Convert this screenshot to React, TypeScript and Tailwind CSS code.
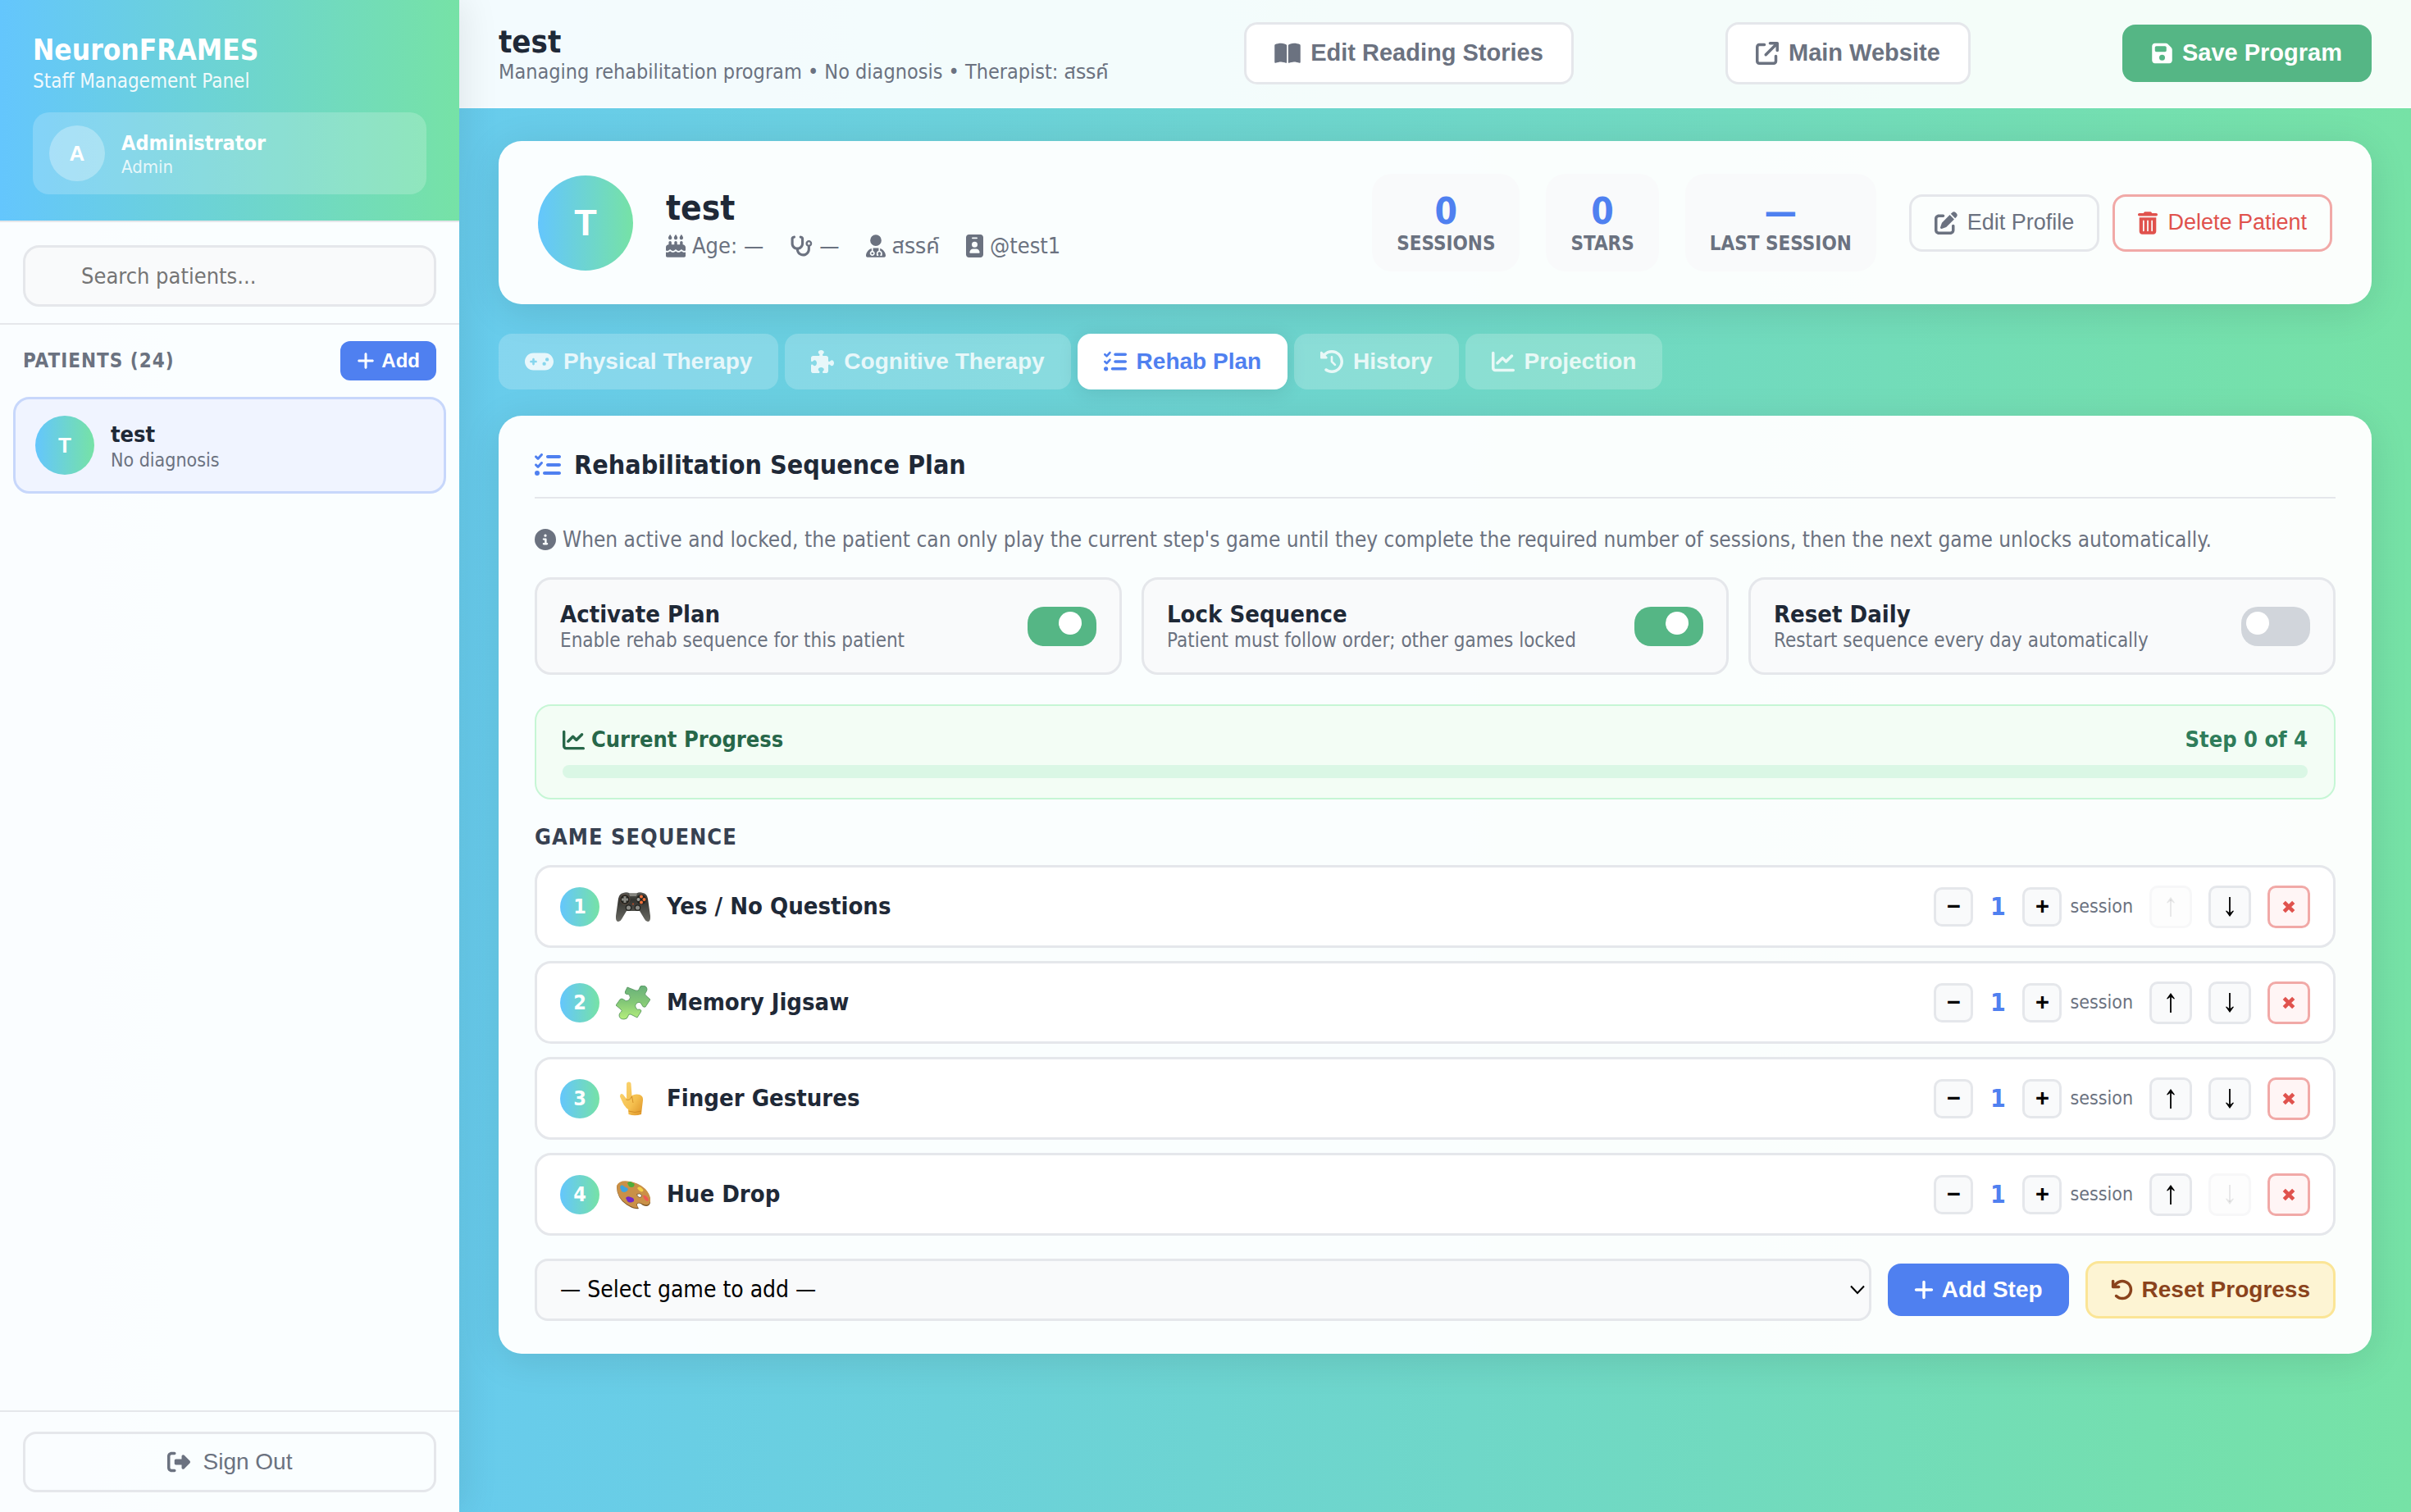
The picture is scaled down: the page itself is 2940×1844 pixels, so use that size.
import { useState } from 'react';
import type { ReactNode } from 'react';
import clsx from 'clsx';
import {
  FaArrowRotateLeft,
  FaArrowUpRightFromSquare,
  FaBookOpen,
  FaCakeCandles,
  FaChartLine,
  FaCircleInfo,
  FaClockRotateLeft,
  FaFloppyDisk,
  FaGamepad,
  FaIdBadge,
  FaListCheck,
  FaPenToSquare,
  FaPlus,
  FaPuzzlePiece,
  FaRightFromBracket,
  FaStethoscope,
  FaTrashCan,
  FaUserDoctor,
} from 'react-icons/fa6';

const GRADIENT = 'bg-[linear-gradient(90deg,#64c6fd,#76e2a6)]';
const BUTTON_FONT = "font-['Liberation_Sans',Arial,sans-serif]";

interface AvatarProps {
  letter: string;
  className: string;
}

function Avatar({ letter, className }: AvatarProps) {
  return (
    <div
      className={clsx(
        'rounded-full flex items-center justify-center shrink-0 text-white font-bold',
        className,
      )}
    >
      {letter}
    </div>
  );
}

/* Game pictures */

function ControllerPicture() {
  return (
    <svg viewBox="0 0 42 42" className="w-[42px] h-[42px]" aria-hidden="true">
      <defs>
        <linearGradient id="pad" x1="0" y1="0" x2="0" y2="1">
          <stop offset="0" stopColor="#5a5a56" />
          <stop offset="0.25" stopColor="#33332f" />
          <stop offset="1" stopColor="#6a6a64" />
        </linearGradient>
      </defs>
      <path
        d="M9 4 Q13 2.5 17 4.5 H25 Q29 2.5 33 4 Q38 5 39 11 L42 32 Q42.5 39 39 39 Q36.5 39 35 36 L29 26 H13 L7 36 Q5.5 39 3 39 Q-0.5 39 0 32 L3 11 Q4 5 9 4Z"
        fill="url(#pad)"
      />
      <path d="M16 4.5 H26 L25 8 H17Z" fill="#85857f" />
      <circle cx="11" cy="12" r="6" fill="#23231f" stroke="#6d5446" strokeWidth="0.7" />
      <path d="M9.5 8 H12.5 V10.5 H15 V13.5 H12.5 V16 H9.5 V13.5 H7 V10.5 H9.5Z" fill="#8a8a84" />
      <circle cx="31" cy="12" r="6" fill="#23231f" />
      <circle cx="31" cy="8.5" r="2" fill="#f0713a" />
      <circle cx="27.5" cy="12" r="2" fill="#a3a39d" />
      <circle cx="34.5" cy="12" r="2" fill="#f0713a" />
      <circle cx="31" cy="15.5" r="2" fill="#f0713a" />
      <circle cx="15.5" cy="22" r="3.8" fill="#20201d" />
      <circle cx="15.5" cy="22" r="2.6" fill="#8b8b86" />
      <circle cx="26.5" cy="22" r="3.8" fill="#20201d" />
      <circle cx="26.5" cy="22" r="2.6" fill="#8b8b86" />
      <circle cx="21" cy="17.5" r="1" fill="#c9502a" />
    </svg>
  );
}

function JigsawPicture() {
  return (
    <svg viewBox="0 0 42 42" className="w-[42px] h-[42px]" aria-hidden="true">
      <defs>
        <linearGradient id="jig" x1="0" y1="0" x2="0" y2="1">
          <stop offset="0" stopColor="#68b07a" />
          <stop offset="0.5" stopColor="#84c877" />
          <stop offset="1" stopColor="#b4ee7c" />
        </linearGradient>
      </defs>
      <path
        d="M14 2 L24 6 Q28 7 28.5 4 Q29 0 33 0 Q38 0.5 38 5 Q37.5 7 36 9 Q35 11 37 12.5 L42 17 L36 26 Q33 27 32 24 Q30 19 26 21 Q22 24 25 28 Q26 30 29 29 Q32 30 30.5 32 L26 39 L18 35 Q15 34.5 15 37 Q14 41 10 41 Q4 41 4 36 Q4 33.5 6.5 32 Q8 30.5 6 29 L0 24 L5 17 Q7 15 9.5 17 Q12 20 15.5 18 Q19 15 16.5 11.5 Q15 10 13 10.5 Q10.5 10 11.5 7Z"
        fill="url(#jig)"
        stroke="#4f8f58"
        strokeWidth="0.8"
        strokeLinejoin="round"
      />
    </svg>
  );
}

function FingerPicture() {
  return (
    <svg viewBox="0 0 42 42" className="w-[42px] h-[42px]" aria-hidden="true">
      <defs>
        <linearGradient id="hand" x1="0" y1="0" x2="1" y2="1">
          <stop offset="0" stopColor="#fbd877" />
          <stop offset="0.6" stopColor="#f5c04f" />
          <stop offset="1" stopColor="#dd9226" />
        </linearGradient>
      </defs>
      <path
        d="M13 3 Q13 0.5 15.8 0.5 Q18.5 0.5 18.5 3 L19.5 17 Q24 14.5 29 16 Q33.5 17.5 33 23 L32 31 L31 40 Q23 42.5 15.5 40 L15 34 Q10 30 8.5 26 L5 18.5 Q5 15 7 15 Q9 15 10.5 18 L13 21Z"
        fill="url(#hand)"
      />
      <path
        d="M12.5 22 Q17 24 19.5 18 M19.5 18 L21 26 M15.5 36 Q23 39 31 36"
        fill="none"
        stroke="#d08a24"
        strokeWidth="0.9"
      />
    </svg>
  );
}

function PalettePicture() {
  return (
    <svg viewBox="0 0 42 42" className="w-[42px] h-[42px]" aria-hidden="true">
      <path
        d="M1 11 Q4 4 14 5 Q27 6 36 15 Q43 23 42 31 Q40 37 33 34 Q28 30 26 32.5 Q25.5 35 28 38 Q23 39 16 35 Q1 27 1 11Z"
        fill="#7a5426"
      />
      <path
        d="M1 10 Q4 3.5 14 4.5 Q27 5.5 36 14 Q43 22 42 29.5 Q40 35.5 33 32.5 Q28 29.5 25.5 32 Q24.5 34 27 36.8 Q23 38 16 34 Q1 26 1 10Z"
        fill="#ca9047"
      />
      <path
        d="M25.5 20.5 Q29 18.5 31.5 21.5 Q32 24.5 29 24.5 Q25.5 23.5 25.5 20.5Z"
        fill="#fff"
        stroke="#7a5426"
        strokeWidth="0.9"
      />
      <path d="M5 12 Q6 8 9 10 Q11 12 14 13 Q16 15 13 17 Q10 19 7 17 Q6 14 5 12Z" fill="#3fa4dc" />
      <path d="M14 7 Q17 3.5 20 6.5 Q24 7 22 11 Q19 13 16 11Z" fill="#4fae3a" />
      <path d="M26 13 Q29 10 32 13.5 Q35 16 32 17.5 Q29 17.5 26 13Z" fill="#f4cf47" />
      <path d="M12 25 Q14 22 18 24 Q23 25 22 29 Q17 32 14 29Z" fill="#7527c4" />
      <path d="M33 22 Q36 21 39 25 Q41 29 38 29 Q34 27 33 22Z" fill="#ee5a52" />
    </svg>
  );
}

/* Thin arrow of the reorder buttons */
function MoveArrow({ down }: { down?: boolean }) {
  return (
    <svg viewBox="0 0 12 24" className={clsx('w-3 h-6', down && 'rotate-180')} aria-hidden="true">
      <path d="M6 24 V3" stroke="currentColor" strokeWidth="1.8" />
      <path d="M6 0 L11 7 L10 7.6 L6 4.6 L2 7.6 L1 7Z" fill="currentColor" />
    </svg>
  );
}

/* Sidebar */

function Sidebar() {
  const [query, setQuery] = useState('');

  return (
    <aside className="w-[560px] shrink-0 flex flex-col bg-white/97 shadow-[8px_0_40px_rgba(0,0,0,0.08)] relative z-10">
      <div className={clsx(GRADIENT, 'px-10 pt-10 pb-8 text-white')}>
        <h1 className="text-[35px] leading-[42px] font-bold">NeuronFRAMES</h1>
        <p className="text-[24px] leading-[35px] opacity-90">Staff Management Panel</p>
        <div className="mt-5 h-[100px] px-5 rounded-[20px] bg-white/20 flex items-center gap-5">
          <Avatar letter="A" className={clsx(BUTTON_FONT, 'size-[68px] bg-white/30 text-[26px]')} />
          <div className="pt-1">
            <p className="text-[25px] leading-[30px] font-bold">Administrator</p>
            <p className="text-[22px] leading-[28px] opacity-80">Admin</p>
          </div>
        </div>
      </div>

      <div className="px-7 pt-7 pb-5 border-y-2 border-[#e5e7eb]">
        <input
          type="text"
          aria-label="Search patients"
          value={query}
          onChange={(e) => setQuery(e.target.value)}
          placeholder="Search patients..."
          className="w-full h-[75px] pl-[68px] pr-5 rounded-[20px] border-3 border-[#e5e7eb] bg-[#f9fafb] text-[27px] placeholder-[#757575] outline-none"
        />
      </div>

      <div className="px-7 pt-5 pb-5 flex items-center justify-between">
        <h2 className="text-[24px] font-bold text-[#6b7280] tracking-[1px]">PATIENTS (24)</h2>
        <button
          className={clsx(
            BUTTON_FONT,
            'h-12 px-5 rounded-[12px] bg-[#4f80f0] text-white text-[24px] font-bold flex items-center gap-2',
          )}
        >
          <FaPlus className="h-6 w-[22px]" />
          Add
        </button>
      </div>

      <div className="px-4 flex-1">
        <button className="w-full h-[118px] px-6 rounded-[20px] border-3 border-[#c7d7fb] bg-[#f0f4ff] flex items-center gap-5 text-left">
          <Avatar letter="T" className={clsx(GRADIENT, BUTTON_FONT, 'size-[72px] text-[26px]')} />
          <span className="pt-1">
            <span className="block text-[27px] leading-[32px] font-bold text-[#1f2937]">test</span>
            <span className="block text-[23px] leading-[30px] text-[#6b7280]">No diagnosis</span>
          </span>
        </button>
      </div>

      <div className="px-7 py-6 border-t-2 border-[#e5e7eb]">
        <button
          className={clsx(
            BUTTON_FONT,
            'w-full h-[74px] rounded-[16px] border-3 border-[#e5e7eb] text-[#6b7280] text-[28px] flex items-center justify-center gap-4',
          )}
        >
          <FaRightFromBracket className="size-7" />
          Sign Out
        </button>
      </div>
    </aside>
  );
}

/* Top bar */

function TopBar() {
  const outline =
    'h-[76px] px-[34px] rounded-[16px] border-3 border-[#e5e7eb] bg-white text-[#6b7280] text-[29px] font-bold flex items-center gap-3 whitespace-nowrap';

  return (
    <header className="h-[132px] px-12 flex items-center justify-between bg-white/92 border-b-2 border-white/40">
      <div className="w-[724px] pt-1.5 whitespace-nowrap">
        <h2 className="text-[38px] leading-[40px] font-bold text-[#1f2937]">test</h2>
        <p className="text-[25px] leading-[34px] text-[#6b7280]">
          Managing rehabilitation program • No diagnosis • Therapist: สรรค์
        </p>
      </div>
      <button className={clsx(BUTTON_FONT, outline)}>
        <FaBookOpen className="h-7 w-8" />
        Edit Reading Stories
      </button>
      <a href="#website" className={clsx(BUTTON_FONT, outline)}>
        <FaArrowUpRightFromSquare className="size-7" />
        Main Website
      </a>
      <button
        className={clsx(
          BUTTON_FONT,
          'h-[70px] px-9 rounded-[16px] bg-[#55b685] text-white text-[29px] font-bold flex items-center gap-3 whitespace-nowrap',
        )}
      >
        <FaFloppyDisk className="h-7 w-[25px]" />
        Save Program
      </button>
    </header>
  );
}

/* Patient card */

function Stat({ value, label }: { value: string; label: string }) {
  return (
    <div className="h-[119px] px-[30px] pt-1 rounded-[24px] bg-[#f9fafb] flex flex-col items-center justify-center">
      <span className="text-[44px] leading-[46px] font-bold text-[#4f80f0]">{value}</span>
      <span className="text-[24px] leading-[32px] font-bold text-[#6b7280]">{label}</span>
    </div>
  );
}

function Fact({ icon, children }: { icon: ReactNode; children: ReactNode }) {
  return (
    <span className="flex items-center gap-2">
      {icon}
      {children}
    </span>
  );
}

function PatientCard() {
  return (
    <section className="px-12 py-10 rounded-[28px] bg-white/97 shadow-[0_8px_48px_rgba(0,0,0,0.10)] flex items-center gap-10">
      <Avatar letter="T" className={clsx(GRADIENT, BUTTON_FONT, 'size-[116px] text-[45px]')} />
      <div className="flex-1 pt-1">
        <h2 className="text-[42px] leading-[48px] font-bold text-[#1f2937]">test</h2>
        <div className="mt-1 flex gap-8 text-[27px] leading-[36px] text-[#6b7280]">
          <Fact icon={<FaCakeCandles className="h-7 w-6" />}>Age: —</Fact>
          <Fact icon={<FaStethoscope className="size-7" />}>—</Fact>
          <Fact icon={<FaUserDoctor className="h-7 w-6" />}>สรรค์</Fact>
          <Fact icon={<FaIdBadge className="h-7 w-[21px]" />}>@test1</Fact>
        </div>
      </div>
      <div className="flex gap-8">
        <Stat value="0" label="SESSIONS" />
        <Stat value="0" label="STARS" />
        <Stat value="—" label="LAST SESSION" />
      </div>
      <div className={clsx(BUTTON_FONT, 'flex gap-4 text-[27px]')}>
        <button className="h-[70px] px-7 rounded-[16px] border-3 border-[#e5e7eb] text-[#6b7280] flex items-center gap-3 whitespace-nowrap">
          <FaPenToSquare className="size-7" />
          Edit Profile
        </button>
        <button className="h-[70px] px-7 rounded-[16px] border-3 border-[#f1a9a7] text-[#e0524d] flex items-center gap-3 whitespace-nowrap">
          <FaTrashCan className="h-7 w-6" />
          Delete Patient
        </button>
      </div>
    </section>
  );
}

/* Tabs */

const TABS = [
  { id: 'physical', label: 'Physical Therapy', icon: <FaGamepad className="h-7 w-[35px]" /> },
  { id: 'cognitive', label: 'Cognitive Therapy', icon: <FaPuzzlePiece className="size-7" /> },
  { id: 'rehab', label: 'Rehab Plan', icon: <FaListCheck className="size-7" /> },
  { id: 'history', label: 'History', icon: <FaClockRotateLeft className="size-7" /> },
  { id: 'projection', label: 'Projection', icon: <FaChartLine className="size-7" /> },
];

function Tabs() {
  const [active, setActive] = useState('rehab');

  return (
    <nav className={clsx(BUTTON_FONT, 'mt-9 flex gap-2')}>
      {TABS.map((tab) => (
        <button
          key={tab.id}
          onClick={() => setActive(tab.id)}
          className={clsx(
            'h-[68px] px-8 rounded-[16px] text-[28px] font-bold flex items-center gap-3 whitespace-nowrap',
            active === tab.id
              ? 'bg-white text-[#4f80f0] shadow-[0_4px_24px_rgba(0,0,0,0.10)]'
              : 'bg-white/20 text-white/80',
          )}
        >
          {tab.icon}
          {tab.label}
        </button>
      ))}
    </nav>
  );
}

/* Plan panel */

interface ToggleCardProps {
  id: string;
  title: string;
  hint: string;
  initial: boolean;
}

function ToggleCard({ id, title, hint, initial }: ToggleCardProps) {
  const [checked, setChecked] = useState(initial);

  return (
    <div className="h-[119px] px-7 rounded-[20px] border-3 border-[#e5e7eb] bg-[#f9fafb] flex items-center justify-between">
      <label htmlFor={id}>
        <span className="block text-[29px] leading-[34px] font-bold text-[#1f2937]">{title}</span>
        <span className="block text-[24px] leading-[30px] text-[#6b7280]">{hint}</span>
      </label>
      <input
        id={id}
        type="checkbox"
        role="switch"
        checked={checked}
        onChange={(e) => setChecked(e.target.checked)}
        className="appearance-none shrink-0 w-[84px] h-12 p-[6px] rounded-[20px] bg-[#d1d5db] checked:bg-[#55b685] before:block before:size-7 before:rounded-full before:bg-white checked:before:ml-8"
      />
    </div>
  );
}

const STEPS = [
  { name: 'Yes / No Questions', picture: <ControllerPicture /> },
  { name: 'Memory Jigsaw', picture: <JigsawPicture /> },
  { name: 'Finger Gestures', picture: <FingerPicture /> },
  { name: 'Hue Drop', picture: <PalettePicture /> },
];

interface StepRowProps {
  index: number;
  name: string;
  picture: ReactNode;
}

function StepRow({ index, name, picture }: StepRowProps) {
  const [sessions, setSessions] = useState(1);
  const counter =
    'size-12 rounded-[10px] border-3 border-[#e5e7eb] bg-[#f9fafb] text-[29px] font-bold text-black flex items-center justify-center';
  const move =
    'size-[52px] rounded-[10px] border-3 border-[#e5e7eb] bg-[#f9fafb] text-black flex items-center justify-center disabled:opacity-30 disabled:text-black/30';

  return (
    <li className="h-[101px] px-7 rounded-[20px] border-3 border-[#e5e7eb] bg-white flex items-center gap-5">
      <Avatar letter={String(index + 1)} className={clsx(GRADIENT, 'size-12 text-[25px]')} />
      {picture}
      <span className="flex-1 text-[29px] font-bold text-[#1f2937]">{name}</span>
      <div className="flex items-center">
        <button
          aria-label="Fewer sessions"
          className={clsx(BUTTON_FONT, counter)}
          onClick={() => setSessions(Math.max(1, sessions - 1))}
        >
          −
        </button>
        <span className="w-[60px] text-center text-[30px] font-bold text-[#4f80f0]">{sessions}</span>
        <button
          aria-label="More sessions"
          className={clsx(BUTTON_FONT, counter)}
          onClick={() => setSessions(sessions + 1)}
        >
          +
        </button>
        <span className="ml-[10px] text-[23px] text-[#6b7280]">session</span>
      </div>
      <button aria-label="Move up" disabled={index === 0} className={move}>
        <MoveArrow />
      </button>
      <button aria-label="Move down" disabled={index === STEPS.length - 1} className={move}>
        <MoveArrow down />
      </button>
      <button
        aria-label="Remove step"
        className="size-[52px] rounded-[10px] border-3 border-[#f1a9a7] bg-[#fff5f5] text-[#e0524d] flex items-center justify-center"
      >
        <svg viewBox="0 0 14 14" className="size-4" aria-hidden="true">
          <path d="M2 2 L12 12 M12 2 L2 12" stroke="currentColor" strokeWidth="4" />
        </svg>
      </button>
    </li>
  );
}

function PlanPanel() {
  return (
    <section className="mt-8 px-11 pt-[42px] pb-10 rounded-[28px] bg-white/97 shadow-[0_8px_48px_rgba(0,0,0,0.10)]">
      <h2 className="h-[59px] pb-[21px] border-b-2 border-[#e5e7eb] flex items-center gap-4 text-[32px] font-bold text-[#1f2937]">
        <FaListCheck className="size-8 text-[#4f80f0]" />
        Rehabilitation Sequence Plan
      </h2>

      <p className="mt-8 h-[36px] flex items-center gap-2 text-[26px] leading-[36px] text-[#6b7280]">
        <FaCircleInfo className="size-[26px] shrink-0" />
        When active and locked, the patient can only play the current step's game until they complete the required
        number of sessions, then the next game unlocks automatically.
      </p>

      <div className="mt-7 grid grid-cols-3 gap-6">
        <ToggleCard id="activate" title="Activate Plan" hint="Enable rehab sequence for this patient" initial />
        <ToggleCard id="lock" title="Lock Sequence" hint="Patient must follow order; other games locked" initial />
        <ToggleCard id="reset" title="Reset Daily" hint="Restart sequence every day automatically" initial={false} />
      </div>

      <div className="mt-9 px-8 pt-6 pb-6 rounded-[20px] border-2 border-[#c6f6d5] bg-[#f3fdf5]">
        <div className="flex items-center justify-between text-[27px] leading-[34px] font-bold">
          <span className="flex items-center gap-2 text-[#276749]">
            <FaChartLine className="size-[27px]" />
            Current Progress
          </span>
          <span className="text-[#2f7d5b]">Step 0 of 4</span>
        </div>
        <div className="mt-[14px] h-4 rounded-[8px] bg-[#daf7e5]" />
      </div>

      <h3 className="mt-7 text-[27px] leading-[36px] font-bold text-[#374151] tracking-[1px]">GAME SEQUENCE</h3>
      <ol className="mt-4 flex flex-col gap-4">
        {STEPS.map((step, i) => (
          <StepRow key={step.name} index={i} name={step.name} picture={step.picture} />
        ))}
      </ol>

      <div className="mt-7 flex items-center gap-5">
        <div className="relative flex-1">
          <select
            aria-label="Game to add"
            className="w-full h-[76px] px-7 rounded-[16px] border-3 border-[#e5e7eb] bg-[#f9fafb] text-[28px] text-black appearance-none"
          >
            <option>— Select game to add —</option>
          </select>
          <svg
            viewBox="0 0 18 12"
            className="absolute right-2 top-8 w-[18px] h-[12px] pointer-events-none"
            aria-hidden="true"
          >
            <path d="M1 1.5 L9 10 L17 1.5" fill="none" stroke="#000" strokeWidth="2" />
          </svg>
        </div>
        <button
          className={clsx(
            BUTTON_FONT,
            'h-16 px-8 rounded-[16px] bg-[#4f80f0] text-white text-[28px] font-bold flex items-center gap-2.5 whitespace-nowrap',
          )}
        >
          <FaPlus className="h-7 w-6" />
          Add Step
        </button>
        <button
          className={clsx(
            BUTTON_FONT,
            'h-[70px] px-7 rounded-[16px] border-3 border-[#fbe596] bg-[#fdf4d3] text-[#8a431c] text-[28px] font-bold flex items-center gap-2.5 whitespace-nowrap',
          )}
        >
          <FaArrowRotateLeft className="size-7" />
          Reset Progress
        </button>
      </div>
    </section>
  );
}

export default function App() {
  return (
    <div
      className={clsx(
        GRADIENT,
        "min-h-screen flex font-['DejaVu_Sans_Condensed','Noto_Sans_Thai','Noto_Sans',sans-serif]",
      )}
    >
      <Sidebar />
      <div className="flex-1 min-w-0">
        <TopBar />
        <main className="px-12 py-10">
          <PatientCard />
          <Tabs />
          <PlanPanel />
        </main>
      </div>
    </div>
  );
}
